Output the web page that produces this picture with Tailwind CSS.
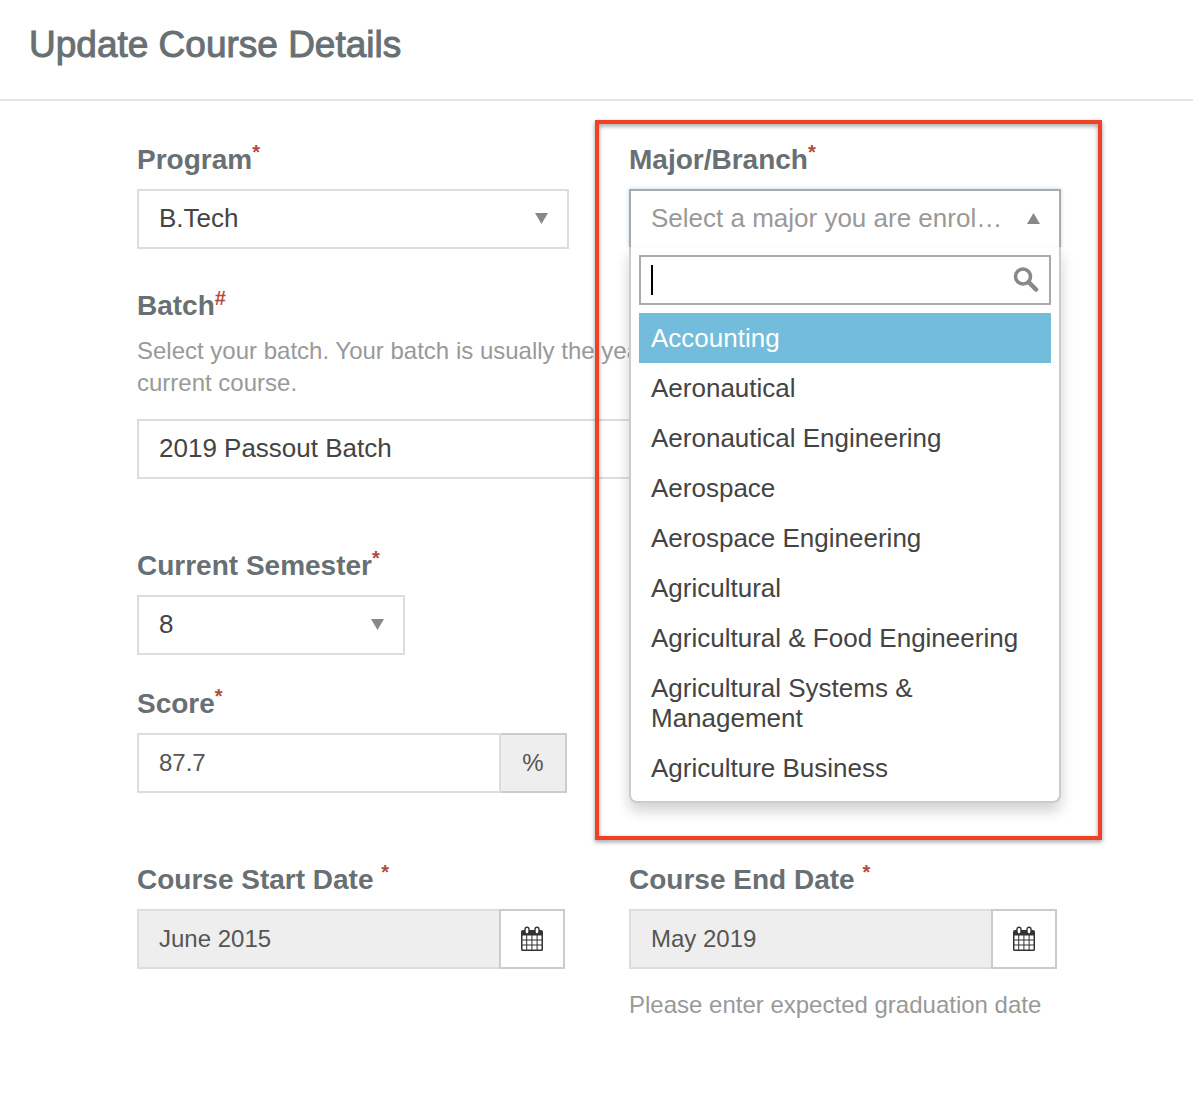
<!DOCTYPE html>
<html lang="en">
<head>
<meta charset="utf-8">
<meta name="viewport" content="width=device-width, initial-scale=1">
<title>Update Course Details</title>
<script src="https://cdn.jsdelivr.net/npm/@tailwindcss/browser@4"></script>
</head>
<body class="min-h-screen bg-white font-['Liberation_Sans',Arial,sans-serif] text-[#444]">

<svg class="hidden" aria-hidden="true">
  <symbol id="calendar" viewBox="0 0 24 26">
    <path fill="#333" fill-rule="evenodd" d="M3 4h18a2 2 0 0 1 2 2v17.500a1.500 1.500 0 0 1-1.500 1.500h-19A1.500 1.500 0 0 1 1 23.500V6a2 2 0 0 1 2-2zM2.500 9.500v4h3.700v-4zM7.200 9.500v4h4.200v-4zM12.400 9.500v4h4.200v-4zM17.600 9.500v4h3.900v-4zM2.500 14.500v3.900h3.700v-3.900zM7.200 14.500v3.900h4.200v-3.900zM12.400 14.500v3.900h4.200v-3.900zM17.600 14.500v3.900h3.900v-3.900zM2.500 19.400v4.100h3.700v-4.100zM7.200 19.400v4.100h4.200v-4.100zM12.400 19.400v4.100h4.200v-4.100zM17.600 19.400v4.100h3.900v-4.100z"/>
    <rect x="5" y="1.200" width="4" height="6.800" rx="2" fill="#fff" stroke="#333" stroke-width="1.400"/>
    <rect x="15" y="1.200" width="4" height="6.800" rx="2" fill="#fff" stroke="#333" stroke-width="1.400"/>
  </symbol>
</svg>

<header class="border-b-2 border-[#e5e5e5] px-[29px] pt-[21px] pb-[30px]">
  <h1 class="text-[37px] leading-[48px] text-[#687074] [-webkit-text-stroke:1px_#687074]">Update Course Details</h1>
</header>

<form class="pt-[38px] pr-[132px] pb-12 pl-[137px]">
  <div class="grid grid-cols-2 gap-x-[60px]">
    <div>
      <label for="program" class="mb-2 block text-[28px] leading-[42px] font-bold text-[#687074]">Program<sup class="text-[20px] text-[#b1493f]">*</sup></label>
      <div class="relative">
        <select id="program" class="h-[60px] w-full appearance-none border-2 border-[#ddd] bg-white pr-12 pb-0.5 pl-5 text-[26px]"><option>B.Tech</option></select>
        <svg class="pointer-events-none absolute top-6 right-[21px] h-[11px] w-[13px]" viewBox="0 0 12 10" preserveAspectRatio="none" aria-hidden="true"><path fill="#888" d="M0 0h12L6 10z"/></svg>
      </div>
    </div>

    <div class="relative z-10">
      <label for="major" class="mb-2 block text-[28px] leading-[42px] font-bold text-[#687074]">Major/Branch<sup class="text-[20px] text-[#b1493f]">*</sup></label>
      <button id="major" type="button" aria-haspopup="listbox" aria-expanded="true" class="flex h-[58px] w-full items-center border-2 border-b-0 border-[#aaa] bg-white pr-[19px] pb-0.5 pl-5 text-left text-[26px] text-[#999] shadow-[0_0_4px_#b5d5f5]">
        <span class="w-[356px] truncate">Select a major you are enrolled in</span>
        <svg class="ml-auto h-[11px] w-[13px]" viewBox="0 0 12 10" preserveAspectRatio="none" aria-hidden="true"><path fill="#888" d="M0 10h12L6 0z"/></svg>
      </button>

      <div class="absolute top-[108px] right-0 left-0 rounded-b-lg border-2 border-t-0 border-[#ccc] bg-white p-2 shadow-[0_8px_14px_rgba(0,0,0,0.18)]">
        <div class="relative mb-2">
          <input type="text" aria-label="Search majors" class="block h-[50px] w-full border-2 border-[#aaa] bg-white pr-12 pl-[10px] text-[26px] outline-none">
          <span class="absolute top-[10px] left-3 h-[30px] w-0.5 bg-black"></span>
          <svg class="absolute top-3 right-3 size-[26px]" viewBox="0 0 26 26" fill="none" stroke="#888" aria-hidden="true"><circle cx="10" cy="9.500" r="7.500" stroke-width="3.600"/><path stroke-width="4.500" stroke-linecap="round" d="M16 15.500l7 7"/></svg>
        </div>
        <ul role="listbox" aria-label="Major/Branch" class="text-[26px] leading-[30px]">
          <li role="option" aria-selected="true" class="bg-[#74bcdb] px-3 py-[10px] text-white">Accounting</li>
          <li role="option" class="px-3 py-[10px]">Aeronautical</li>
          <li role="option" class="px-3 py-[10px]">Aeronautical Engineering</li>
          <li role="option" class="px-3 py-[10px]">Aerospace</li>
          <li role="option" class="px-3 py-[10px]">Aerospace Engineering</li>
          <li role="option" class="px-3 py-[10px]">Agricultural</li>
          <li role="option" class="px-3 py-[10px]">Agricultural &amp; Food Engineering</li>
          <li role="option" class="px-3 py-[10px]">Agricultural Systems &amp; Management</li>
          <li role="option" class="px-3 py-[10px]">Agriculture Business</li>
        </ul>
      </div>

      <div class="pointer-events-none absolute -top-[19px] -right-[41px] -left-[34px] h-[720px] border-4 border-[#ee4126] drop-shadow-[0_2px_2px_rgba(0,0,0,0.4)]"></div>
    </div>
  </div>

  <div class="mt-9">
    <label for="batch" class="mb-2 block text-[28px] leading-[42px] font-bold text-[#687074]">Batch<sup class="text-[20px] text-[#b1493f]">#</sup></label>
    <p class="mb-5 text-[24px] leading-[32px] text-[#999]">Select your batch. Your batch is usually the year you complete your<br>current course.</p>
    <select id="batch" class="block h-[60px] w-full appearance-none border-2 border-[#ddd] bg-white px-5 pb-0.5 text-[26px]"><option>2019 Passout Batch</option></select>
  </div>

  <div class="mt-[66px]">
    <label for="semester" class="mb-2 block text-[28px] leading-[42px] font-bold text-[#687074]">Current Semester<sup class="text-[20px] text-[#b1493f]">*</sup></label>
    <div class="relative w-[268px]">
      <select id="semester" class="block h-[60px] w-full appearance-none border-2 border-[#ddd] bg-white pr-12 pb-0.5 pl-5 text-[26px]"><option>8</option></select>
      <svg class="pointer-events-none absolute top-6 right-[21px] h-[11px] w-[13px]" viewBox="0 0 12 10" preserveAspectRatio="none" aria-hidden="true"><path fill="#888" d="M0 0h12L6 10z"/></svg>
    </div>
  </div>

  <div class="mt-7">
    <label for="score" class="mb-2 block text-[28px] leading-[42px] font-bold text-[#687074]">Score<sup class="text-[20px] text-[#b1493f]">*</sup></label>
    <div class="flex h-[60px] w-[430px] text-[24px] text-[#555]">
      <input id="score" type="text" value="87.7" class="min-w-0 flex-1 border-2 border-[#ddd] bg-white px-5">
      <span class="flex w-[66px] items-center justify-center border-2 border-l-0 border-[#ccc] bg-[#eee]">%</span>
    </div>
  </div>

  <div class="mt-[66px] grid grid-cols-2 gap-x-[60px]">
    <div>
      <label for="start" class="mb-2 block text-[28px] leading-[42px] font-bold text-[#687074]">Course Start Date <sup class="text-[20px] text-[#b1493f]">*</sup></label>
      <div class="flex h-[60px] w-[428px] text-[24px] text-[#555]">
        <input id="start" type="text" readonly value="June 2015" class="min-w-0 flex-1 border-2 border-r-0 border-[#ddd] bg-[#eee] px-5">
        <button type="button" aria-label="Choose start date" class="flex w-[66px] items-center justify-center border-2 border-[#ccc] bg-white"><svg class="h-[26px] w-6" aria-hidden="true"><use href="#calendar"/></svg></button>
      </div>
    </div>
    <div>
      <label for="end" class="mb-2 block text-[28px] leading-[42px] font-bold text-[#687074]">Course End Date <sup class="text-[20px] text-[#b1493f]">*</sup></label>
      <div class="flex h-[60px] w-[428px] text-[24px] text-[#555]">
        <input id="end" type="text" readonly value="May 2019" class="min-w-0 flex-1 border-2 border-r-0 border-[#ddd] bg-[#eee] px-5">
        <button type="button" aria-label="Choose end date" class="flex w-[66px] items-center justify-center border-2 border-[#ccc] bg-white"><svg class="h-[26px] w-6" aria-hidden="true"><use href="#calendar"/></svg></button>
      </div>
      <p class="mt-5 text-[24px] leading-[32px] text-[#999]">Please enter expected graduation date</p>
    </div>
  </div>
</form>
</body>
</html>
